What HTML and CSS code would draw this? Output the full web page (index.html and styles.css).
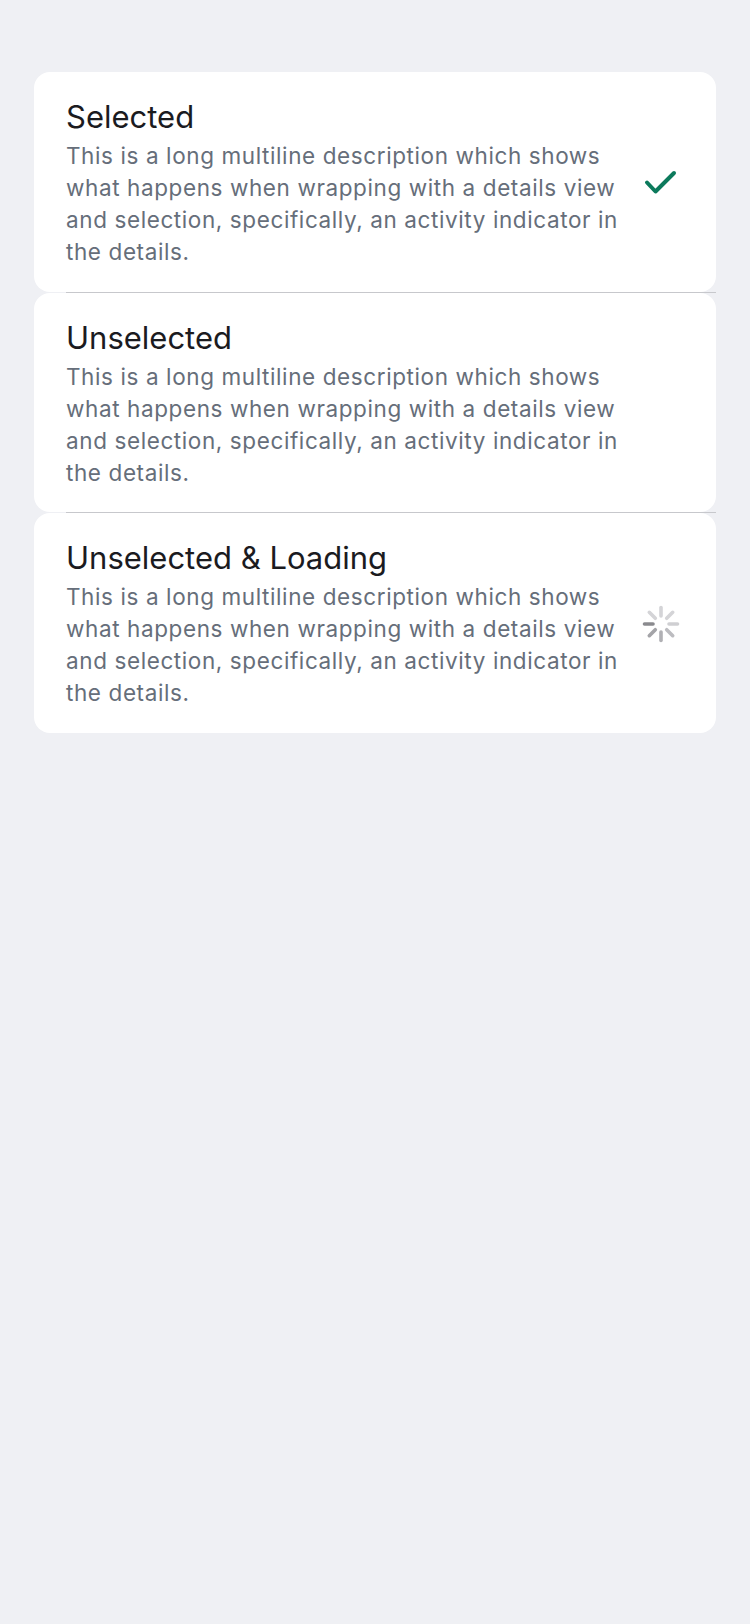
FILE: index.html
```html
<!DOCTYPE html>
<html lang="en">
<head>
<meta charset="utf-8">
<meta name="viewport" content="width=750">
<link rel="stylesheet" href="styles.css">
</head>
<body>
<main class="list">
  <div class="row">
    <div class="text">
      <div class="title">Selected</div>
      <div class="desc">This is a long multiline description which shows what happens when wrapping with a details view and selection, specifically, an activity indicator in the details.</div>
    </div>
    <div class="accessory">
      <svg class="check" width="34" height="26" viewBox="0 0 34 26"><path d="M3 12.5 L11.5 21.5 L30 3" fill="none" stroke="#0c7a5c" stroke-width="4" stroke-linecap="round" stroke-linejoin="round"/></svg>
    </div>
  </div>
  <div class="sep"></div>
  <div class="row">
    <div class="text">
      <div class="title">Unselected</div>
      <div class="desc">This is a long multiline description which shows what happens when wrapping with a details view and selection, specifically, an activity indicator in the details.</div>
    </div>
    <div class="accessory"></div>
  </div>
  <div class="sep"></div>
  <div class="row">
    <div class="text">
      <div class="title">Unselected &amp; Loading</div>
      <div class="desc">This is a long multiline description which shows what happens when wrapping with a details view and selection, specifically, an activity indicator in the details.</div>
    </div>
    <div class="accessory">
      <svg class="spinner" width="40" height="40" viewBox="0 0 40 40" stroke-width="3.6" stroke-linecap="round">
        <line x1="12" y1="20" x2="3.5" y2="20" stroke="#8a8a8e"/>
        <line x1="14.3" y1="25.7" x2="8.3" y2="31.7" stroke="#a4a4a8"/>
        <line x1="20" y1="28" x2="20" y2="36.5" stroke="#b0b0b4"/>
        <line x1="25.7" y1="25.7" x2="31.7" y2="31.7" stroke="#bcbcc0"/>
        <line x1="28" y1="20" x2="36.5" y2="20" stroke="#cfcfd2"/>
        <line x1="25.7" y1="14.3" x2="31.7" y2="8.3" stroke="#d4d4d7"/>
        <line x1="20" y1="12" x2="20" y2="3.5" stroke="#d4d4d7"/>
        <line x1="14.3" y1="14.3" x2="8.3" y2="8.3" stroke="#d4d4d7"/>
      </svg>
    </div>
  </div>
</main>
</body>
</html>
```

FILE: styles.css
```css
html, body {
  margin: 0;
  padding: 0;
}
body {
  background: #eff0f4;
  width: 750px;
  height: 1624px;
  font-family: Inter, "Noto Sans", "Liberation Sans", sans-serif;
}
.list {
  margin: 72px 34px 0 34px;
  display: flex;
  flex-direction: column;
}
.row {
  background: #ffffff;
  border-radius: 16px;
  display: flex;
  align-items: center;
  padding: 26px 33px 23.5px 32px;
  min-height: 168px;
}
.text {
  flex: 1;
  min-width: 0;
}
.title {
  font-size: 31px;
  line-height: 38px;
  color: #1b1b1f;
  padding-bottom: 4px;
}
.desc {
  font-size: 22.5px;
  line-height: 32px;
  letter-spacing: 0.6px;
  color: #666e7a;
}
.accessory {
  width: 44px;
  flex: none;
  margin-left: 12px;
  display: flex;
  align-items: center;
  justify-content: center;
}
.sep {
  height: 1px;
  background: #c7c8cc;
  margin-left: 32px;
}
```
